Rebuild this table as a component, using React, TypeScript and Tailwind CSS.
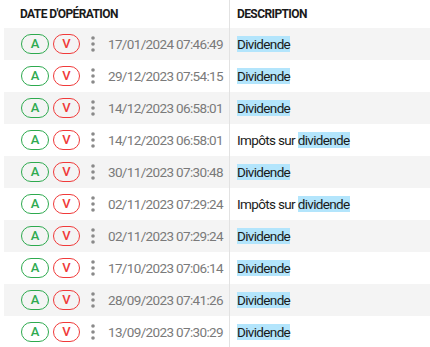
import type { FC } from "react";

interface Op {
  date: string;
  prefix?: string;
  word: string;
}

const ops: Op[] = [
  { date: "17/01/2024 07:46:49", word: "Dividende" },
  { date: "29/12/2023 07:54:15", word: "Dividende" },
  { date: "14/12/2023 06:58:01", word: "Dividende" },
  { date: "14/12/2023 06:58:01", prefix: "Impôts sur ", word: "dividende" },
  { date: "30/11/2023 07:30:48", word: "Dividende" },
  { date: "02/11/2023 07:29:24", prefix: "Impôts sur ", word: "dividende" },
  { date: "02/11/2023 07:29:24", word: "Dividende" },
  { date: "17/10/2023 07:06:14", word: "Dividende" },
  { date: "28/09/2023 07:41:26", word: "Dividende" },
  { date: "13/09/2023 07:30:29", word: "Dividende" },
];

const Dots: FC = () => (
  <svg width="4" height="16" viewBox="0 0 4 16" className="ml-[11px] mr-[13px] shrink-0">
    <circle cx="2" cy="2" r="1.8" fill="#8a8a8a" />
    <circle cx="2" cy="8" r="1.8" fill="#8a8a8a" />
    <circle cx="2" cy="14" r="1.8" fill="#8a8a8a" />
  </svg>
);

const Row: FC<{ op: Op; odd: boolean }> = ({ op, odd }) => (
  <div className={`flex h-8 ${odd ? "bg-[#f4f4f4]" : "bg-white"}`}>
    <div className="flex w-[225px] shrink-0 items-center whitespace-nowrap pl-[17px]">
      <span className="flex h-5 w-[28px] shrink-0 items-center justify-center rounded-full border border-[#2eaa4f] text-[13px] font-medium text-[#2eaa4f]">
        A
      </span>
      <span className="ml-1 flex h-5 w-[27px] shrink-0 items-center justify-center rounded-full border border-[#f03a3a] text-[13px] font-medium text-[#f03a3a]">
        V
      </span>
      <Dots />
      <span className="text-[13.5px] tracking-[-0.65px] text-[#7a7a7a]">{op.date}</span>
    </div>
    <div className="flex flex-1 items-center whitespace-nowrap border-l border-[#e2e2e2] pl-[7px] text-[13.5px] tracking-[-0.65px] text-[#1a1a1a]">
      <span>
        {op.prefix}
        <span className="bg-[#b3e5fc]">{op.word}</span>
      </span>
    </div>
  </div>
);

const App: FC = () => {
  return (
    <div className="w-[430px] h-[347px] overflow-hidden bg-white pl-1 font-['Roboto',sans-serif]">
      <div className="flex h-7 text-[12px] font-bold tracking-[-0.6px] text-[#1a1a1a]">
        <div className="flex w-[225px] shrink-0 items-center pl-4">DATE D'OPÉRATION</div>
        <div className="flex flex-1 items-center border-l border-[#e2e2e2] pl-[7px]">DESCRIPTION</div>
      </div>
      {ops.map((op, i) => (
        <Row key={i} op={op} odd={i % 2 === 0} />
      ))}
    </div>
  );
};

export default App;
